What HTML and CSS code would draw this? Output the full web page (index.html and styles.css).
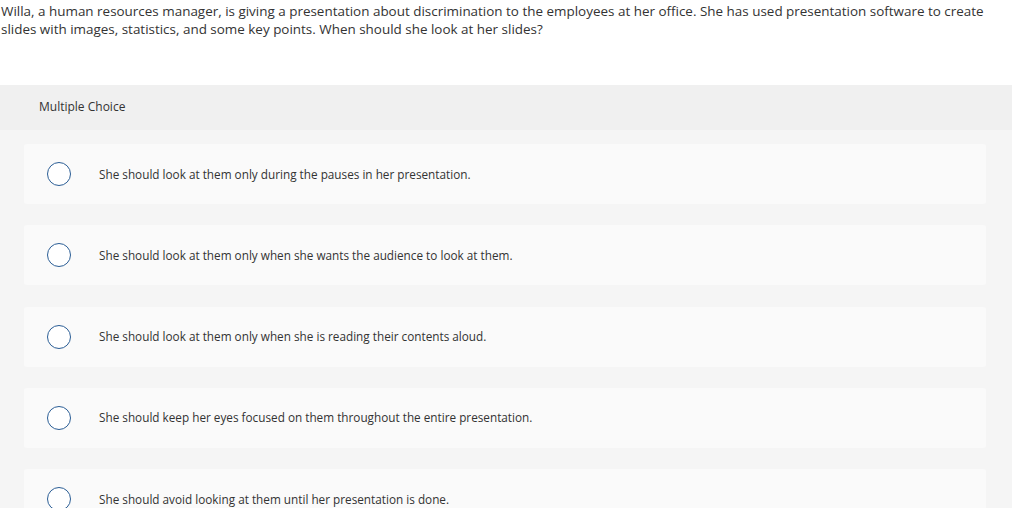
FILE: index.html
```html
<!DOCTYPE html>
<html>
<head>
<meta charset="utf-8">
<link rel="stylesheet" href="styles.css">
</head>
<body>
<div class="page">
  <p class="question">Willa, a human resources manager, is giving a presentation about discrimination to the employees at her office. She has used presentation software to create slides with images, statistics, and some key points. When should she look at her slides?</p>
  <div class="panel">
    <div class="panel-head">Multiple Choice</div>
    <div class="choices">
      <div class="choice"><span class="radio"></span><span class="label">She should look at them only during the pauses in her presentation.</span></div>
      <div class="choice"><span class="radio"></span><span class="label">She should look at them only when she wants the audience to look at them.</span></div>
      <div class="choice"><span class="radio"></span><span class="label">She should look at them only when she is reading their contents aloud.</span></div>
      <div class="choice"><span class="radio"></span><span class="label">She should keep her eyes focused on them throughout the entire presentation.</span></div>
      <div class="choice"><span class="radio"></span><span class="label">She should avoid looking at them until her presentation is done.</span></div>
    </div>
  </div>
</div>
</body>
</html>
```
FILE: styles.css
```css
html, body {
  margin: 0;
  padding: 0;
  background: #ffffff;
  overflow: hidden;
}
.page {
  width: 1012px;
  font-family: "Open Sans", "Liberation Sans", sans-serif;
  color: #333333;
}
.question {
  margin: 0;
  padding: 2px 0 0 1px;
  font-size: 13.45px;
  line-height: 18px;
  height: 85px;
  box-sizing: border-box;
}
.panel {
  background: #f5f5f5;
}
.panel-head {
  background: #f0f0f0;
  height: 45px;
  display: flex;
  align-items: center;
  padding-left: 39px;
  padding-bottom: 2px;
  box-sizing: border-box;
  font-size: 12px;
  color: #333;
}
.choices {
  padding: 14px 26px 0 24px;
  display: flex;
  flex-direction: column;
  gap: 21.25px;
}
.choice {
  background: #fafafa;
  border-radius: 3px;
  height: 60px;
  display: flex;
  align-items: center;
  padding-bottom: 1px;
  box-sizing: border-box;
}
.radio {
  width: 22px;
  height: 22px;
  border: 1.5px solid #2a5d95;
  border-radius: 50%;
  margin-left: 23px;
  margin-top: 1px;
  background: #fff;
  flex: none;
}
.label {
  margin-left: 28px;
  font-size: 11.75px;
  color: #333;
}
```
